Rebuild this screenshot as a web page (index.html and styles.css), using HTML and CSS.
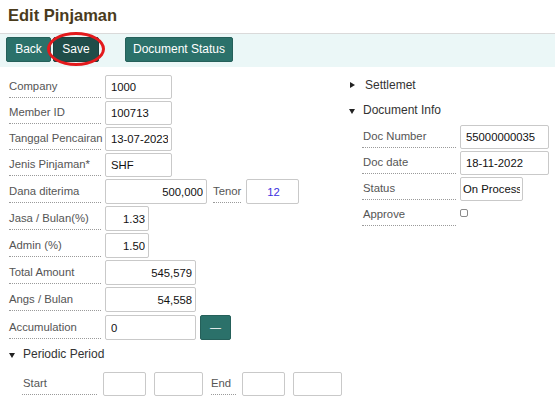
FILE: index.html
```html
<!DOCTYPE html>
<html>
<head>
<meta charset="utf-8">
<link rel="stylesheet" href="styles.css">
</head>
<body>
<h1 class="title">Edit Pinjaman</h1>
<div class="toolbar">
  <button class="btn btn-back">Back</button>
  <span class="save-wrap"><button class="btn btn-save">Save</button><span class="ring"></span></span>
  <button class="btn btn-doc">Document Status</button>
</div>
<div class="main">
  <div class="left">
    <div class="row"><span class="lbl">Company</span><input class="inp w67" value="1000" readonly></div>
    <div class="row"><span class="lbl">Member ID</span><input class="inp w67" value="100713" readonly></div>
    <div class="row"><span class="lbl">Tanggal Pencairan</span><input class="inp w67" value="13-07-2023" readonly></div>
    <div class="row"><span class="lbl">Jenis Pinjaman*</span><input class="inp w67" value="SHF" readonly></div>
    <div class="row tall"><span class="lbl">Dana diterima</span><input class="inp w102 num" value="500,000" readonly><span class="lbl lbl-tenor">Tenor</span><input class="inp w53 ctr blue" value="12" readonly></div>
    <div class="row tall"><span class="lbl">Jasa / Bulan(%)</span><input class="inp w44 num" value="1.33" readonly></div>
    <div class="row tall"><span class="lbl">Admin (%)</span><input class="inp w44 num" value="1.50" readonly></div>
    <div class="row tall"><span class="lbl">Total Amount</span><input class="inp w91 num" value="545,579" readonly></div>
    <div class="row tall"><span class="lbl">Angs / Bulan</span><input class="inp w91 num" value="54,558" readonly></div>
    <div class="row tall acc"><span class="lbl">Accumulation</span><input class="inp w91" value="0" readonly><button class="btn btn-minus">—</button></div>
    <div class="sect sect-period"><span class="tri-down"></span>Periodic Period</div>
    <div class="row period">
      <span class="lbl lbl-start">Start</span>
      <input class="inp w43" value="" readonly>
      <input class="inp w49" value="" readonly>
      <span class="lbl lbl-end">End</span>
      <input class="inp w43" value="" readonly>
      <input class="inp w49" value="" readonly>
    </div>
  </div>
  <div class="right">
    <div class="sect"><span class="tri-right"></span>Settlemet</div>
    <div class="sect"><span class="tri-down"></span>Document Info</div>
    <div class="rfields">
      <div class="row"><span class="lbl rlbl">Doc Number</span><input class="inp w89" value="55000000035" readonly></div>
      <div class="row"><span class="lbl rlbl">Doc date</span><input class="inp w89" value="18-11-2022" readonly></div>
      <div class="row"><span class="lbl rlbl">Status</span><input class="inp w63 tight" value="On Process" readonly></div>
      <div class="row"><span class="lbl rlbl">Approve</span><span class="chk"></span></div>
    </div>
  </div>
</div>
</body>
</html>
```

FILE: styles.css
```css
* { box-sizing: border-box; }
body {
  margin: 0;
  background: #fff;
  font-family: "Liberation Sans", Arial, sans-serif;
  color: #333;
}
.title {
  margin: 0;
  height: 33px;
  padding: 5px 8px 0;
  font-size: 16.5px;
  line-height: 20px;
  font-weight: bold;
  color: #4a3b1c;
}
.toolbar {
  height: 34px;
  border-top: 1px solid #dadada;
  background: #ebf7f7;
  padding: 3px 0 0 6px;
  display: flex;
  align-items: flex-start;
}
.btn {
  height: 25px;
  border: 1px solid #25605a;
  border-radius: 2px;
  background: #2b716a;
  color: #fff;
  font-family: "Liberation Sans", Arial, sans-serif;
  font-size: 12px;
  padding: 0;
  line-height: 23px;
  text-align: center;
}
.btn-back { width: 45px; }
.save-wrap { position: relative; margin-left: 2px; display: flex; }
.btn-save { width: 46px; background: #1f4d49; border-color: #1a413d; }
.ring {
  position: absolute;
  left: -6px;
  top: -5px;
  width: 58px;
  height: 34px;
  border: 3.5px solid #e3191c;
  border-radius: 50%;
}
.btn-doc { width: 108px; margin-left: 26px; }
.main {
  display: flex;
  padding: 8px 0 0 9px;
}
.left { width: 336px; }
.right { flex: 1; padding-left: 4px; }
.row {
  display: flex;
  align-items: flex-start;
  height: 26px;
}
.row.tall { height: 27px; }
.lbl {
  width: 92px;
  height: 23px;
  padding-top: 4px;
  margin-right: 4px;
  border-bottom: 1px dotted #9a9a9a;
  font-size: 11.3px;
  line-height: 14px;
  color: #555;
  white-space: nowrap;
}
.row.tall .lbl { height: 24px; padding-top: 5px; }
.inp {
  height: 24px;
  border: 1px solid #c9c9c9;
  border-radius: 2px;
  padding: 0 3px 0 5px;
  font-family: "Liberation Sans", Arial, sans-serif;
  font-size: 11.3px;
  color: #111;
  background: #fff;
  outline: none;
}
.row.tall .inp { height: 25px; }
.num { text-align: right; }
.ctr { text-align: center; }
.blue { color: #3b2fe0; }
.tight { padding: 0 2px; }
.w43 { width: 43px; }
.w44 { width: 44px; }
.w49 { width: 49px; }
.w53 { width: 53px; }
.w63 { width: 63px; }
.w67 { width: 67px; }
.w89 { width: 89px; }
.w91 { width: 91px; }
.w102 { width: 102px; }
.lbl-tenor { width: 28px; margin-left: 6px; margin-right: 5px; }
.acc { margin-top: 1px; }
.btn-minus { width: 31px; margin-left: 4px; font-size: 11px; }
.sect {
  height: 25px;
  line-height: 20px;
  font-size: 12px;
  color: #333;
  display: flex;
  align-items: flex-start;
}
.tri-right {
  width: 0; height: 0;
  border-top: 3.5px solid transparent;
  border-bottom: 3.5px solid transparent;
  border-left: 5px solid #222;
  margin: 7px 10px 0 1px;
}
.tri-down {
  width: 0; height: 0;
  border-left: 3.5px solid transparent;
  border-right: 3.5px solid transparent;
  border-top: 5px solid #222;
  margin: 9px 8px 0 0;
}
.sect-period { height: 30px; padding-top: 2px; }
.sect-period .tri-down { margin-top: 9px; }
.period .lbl { margin-right: 6px; }
.lbl-start { width: 75px; margin-left: 13px; padding-left: 1px; }
.period .inp + .inp { margin-left: 8px; }
.lbl-end { width: 25px; margin-left: 8px; }
.rfields { padding-left: 13px; }
.rlbl { width: 94px; margin-right: 4px; padding-left: 1px; }
.chk {
  width: 8px;
  height: 8px;
  margin-top: 6px;
  border: 1px solid #8a8a8a;
  border-radius: 2px;
  background: #fff;
}
```
